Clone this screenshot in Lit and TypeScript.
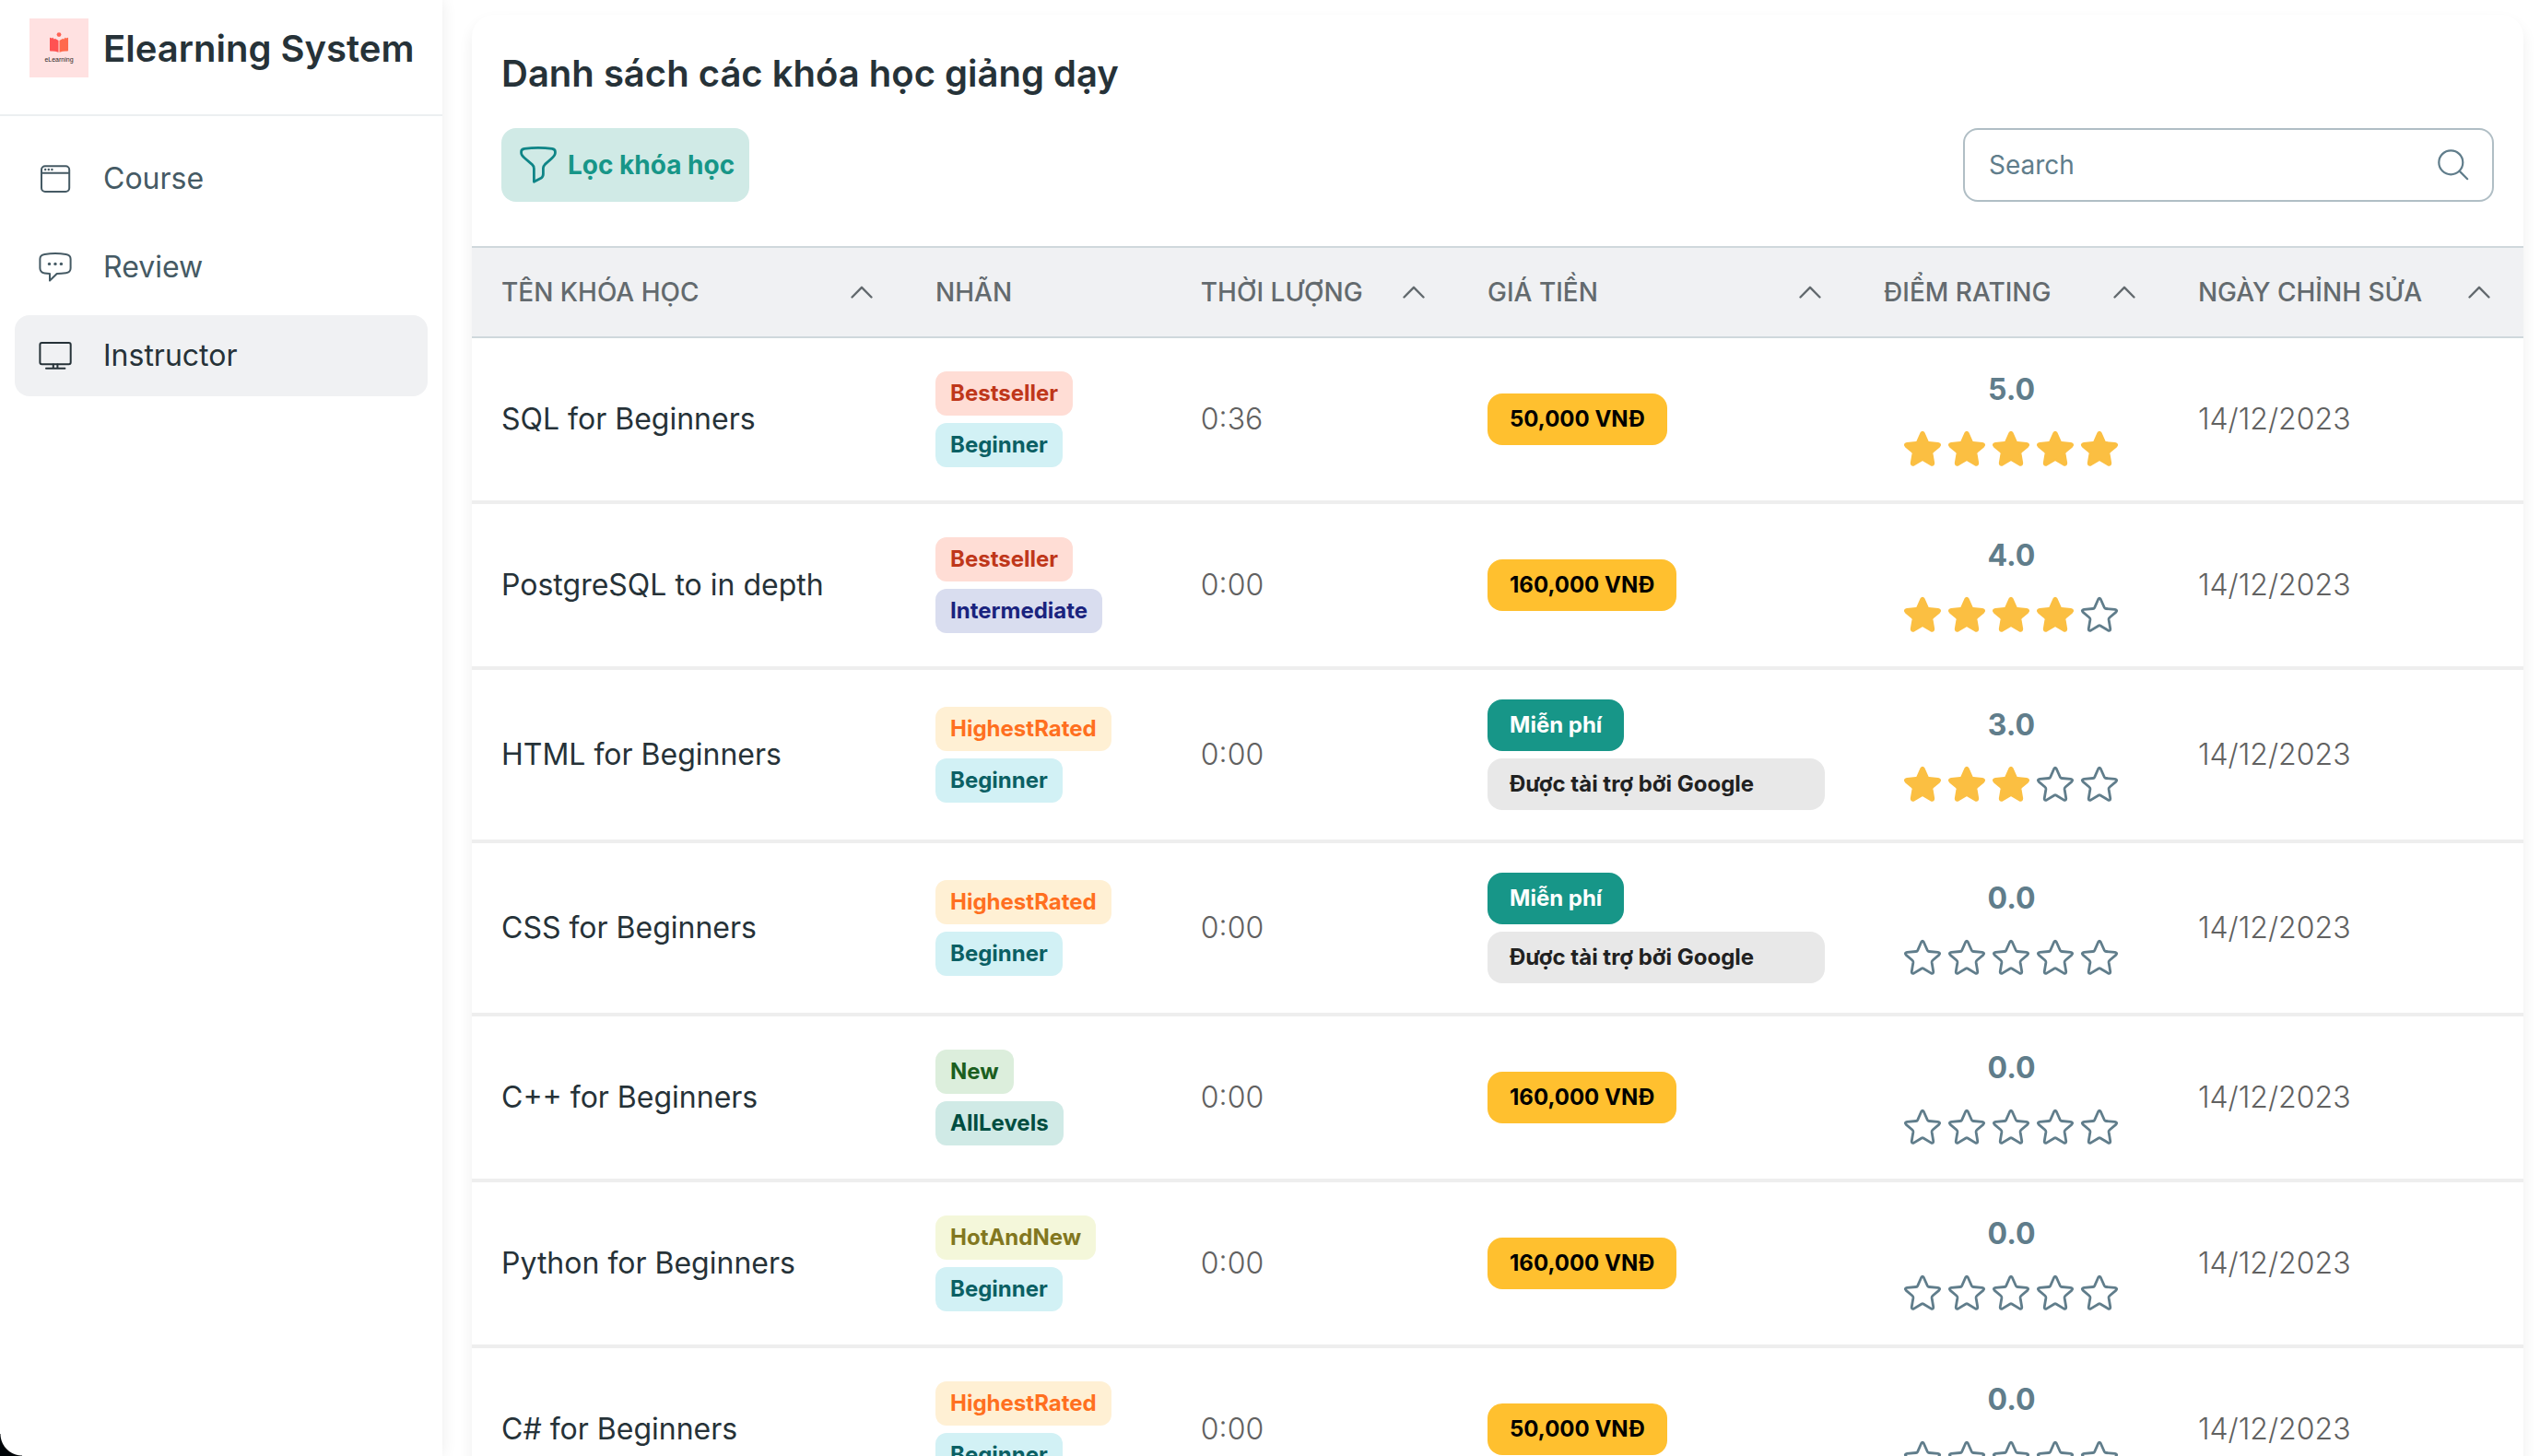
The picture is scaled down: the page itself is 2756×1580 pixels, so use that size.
import { LitElement, html, svg, css } from "lit";
import { customElement, property, state } from "lit/decorators.js";
import { classMap } from "lit/directives/class-map.js";

interface Course {
  name: string;
  tags: string[];
  duration: string;
  price: string;
  sponsor?: string;
  rating: number;
  updated: string;
}

const COURSES: Course[] = [
  { name: "SQL for Beginners", tags: ["Bestseller", "Beginner"], duration: "0:36", price: "50,000 VNĐ", rating: 5, updated: "14/12/2023" },
  { name: "PostgreSQL to in depth", tags: ["Bestseller", "Intermediate"], duration: "0:00", price: "160,000 VNĐ", rating: 4, updated: "14/12/2023" },
  { name: "HTML for Beginners", tags: ["HighestRated", "Beginner"], duration: "0:00", price: "Miễn phí", sponsor: "Được tài trợ bởi Google", rating: 3, updated: "14/12/2023" },
  { name: "CSS for Beginners", tags: ["HighestRated", "Beginner"], duration: "0:00", price: "Miễn phí", sponsor: "Được tài trợ bởi Google", rating: 0, updated: "14/12/2023" },
  { name: "C++ for Beginners", tags: ["New", "AllLevels"], duration: "0:00", price: "160,000 VNĐ", rating: 0, updated: "14/12/2023" },
  { name: "Python for Beginners", tags: ["HotAndNew", "Beginner"], duration: "0:00", price: "160,000 VNĐ", rating: 0, updated: "14/12/2023" },
  { name: "C# for Beginners", tags: ["HighestRated", "Beginner"], duration: "0:00", price: "50,000 VNĐ", rating: 0, updated: "14/12/2023" },
];

const COLUMNS = [
  { label: "TÊN KHÓA HỌC", key: "name", sortable: true },
  { label: "NHÃN", key: "tags", sortable: false },
  { label: "THỜI LƯỢNG", key: "duration", sortable: true },
  { label: "GIÁ TIỀN", key: "price", sortable: true },
  { label: "ĐIỂM RATING", key: "rating", sortable: true },
  { label: "NGÀY CHỈNH SỬA", key: "updated", sortable: true },
];

const MENU_ICONS = {
  course: svg`
    <rect x="5" y="6.3" width="30.2" height="27.6" rx="4"></rect>
    <path d="M5 13.7H35"></path>
    <g class="dot"><circle cx="9.2" cy="10" r="1.2"></circle><circle cx="12.8" cy="10" r="1.2"></circle><circle cx="16.4" cy="10" r="1.2"></circle></g>`,
  review: svg`
    <path d="M8.5 6Q20 4 31.5 6Q36.6 6.8 36.6 11V21Q36.6 25.6 31.5 26.2Q26.5 26.9 21.7 27L14 34.5V27Q11 26.8 8.5 26.4Q3.4 25.6 3.4 21V11Q3.4 6.8 8.5 6Z"></path>
    <g class="dot"><circle cx="13.5" cy="16.4" r="1.7"></circle><circle cx="20" cy="16.4" r="1.7"></circle><circle cx="26.4" cy="16.4" r="1.7"></circle></g>`,
  instructor: svg`
    <rect x="3.4" y="6" width="33.3" height="23.2" rx="2"></rect>
    <path d="M10 33.8H30.4M17.8 29.5V33.5M22.4 29.5V33.5"></path>`,
};

const MENU: { label: string; icon: keyof typeof MENU_ICONS }[] = [
  { label: "Course", icon: "course" },
  { label: "Review", icon: "review" },
  { label: "Instructor", icon: "instructor" },
];

@customElement("star-rating")
export class StarRating extends LitElement {
  @property({ type: Number }) value = 0;

  static styles = css`
    :host {
      display: flex;
      flex-direction: column;
      align-items: center;
      gap: 16px;
    }
    .score {
      font-size: 32px;
      line-height: 48px;
      font-weight: 700;
      color: #607d8b;
    }
    .stars {
      display: flex;
    }
    .star {
      width: 48px;
      height: 48px;
      fill: none;
      stroke: #607d8b;
      stroke-width: 2.8;
      stroke-linejoin: round;
    }
    .star.on {
      fill: #fbbf42;
      stroke: #fbbf42;
    }
  `;

  render() {
    return html`
      <span class="score">${this.value.toFixed(1)}</span>
      <span class="stars" role="img" aria-label="${this.value} / 5">
        ${[1, 2, 3, 4, 5].map(
          (n) => html`<svg class=${classMap({ star: true, on: n <= this.value })} viewBox="0 0 48 48" aria-hidden="true">
            <path d="M22.7 7.3Q24 5.2 25.3 7.3L29.3 16.3Q29.8 17.4 31 17.5L40.8 18.4Q44 19 41.8 21.4L35.1 27Q33.9 28 34.1 29.4L35.8 39.4Q35.9 42.2 33.4 41.1L24.9 36Q24 35.5 23.1 36L14.6 41.1Q12.1 42.2 12.2 39.4L13.9 29.4Q14.1 28 12.9 27L6.2 21.4Q4 19 7.2 18.4L17 17.5Q18.2 17.4 18.7 16.3Z"></path>
          </svg>`
        )}
      </span>
    `;
  }
}

@customElement("app-root")
export class AppRoot extends LitElement {
  @state() private active = "Instructor";

  static styles = css`
    :host {
      display: block;
      font-family: Inter, "Noto Sans", sans-serif;
      color: #263238;
      background: #fff;
    }
    * {
      box-sizing: border-box;
    }
    .layout {
      display: flex;
      position: relative;
      height: 100vh;
      overflow: hidden;
    }
    .sidebar {
      flex: none;
      width: 480px;
      background: #fff;
      box-shadow: 0 0 16px rgba(0, 0, 0, 0.08);
    }
    .brand {
      display: flex;
      align-items: flex-start;
      gap: 16px;
      height: 126px;
      padding: 20px 32px;
      border-bottom: 2px solid #eceff1;
    }
    .logo {
      flex: none;
      width: 64px;
      height: 64px;
    }
    .logo-name {
      font: 400 7px "Liberation Sans", sans-serif;
      fill: #2e2628;
    }
    .brand-name {
      font-size: 40px;
      line-height: 66px;
      font-weight: 600;
      white-space: nowrap;
    }
    .menu {
      display: flex;
      flex-direction: column;
      gap: 8px;
      padding: 24px 16px;
    }
    .menu-item {
      display: flex;
      align-items: center;
      gap: 32px;
      height: 88px;
      padding: 0 24px;
      border-radius: 16px;
      font-size: 32px;
      line-height: 48px;
      color: #455a64;
      text-decoration: none;
    }
    .menu-item.active {
      background: #f0f1f3;
      color: #263238;
    }
    .menu-icon {
      width: 40px;
      height: 40px;
      fill: none;
      stroke: currentColor;
      stroke-width: 2;
      stroke-linejoin: round;
      stroke-linecap: round;
    }
    .dot {
      fill: currentColor;
      stroke: none;
    }
    .main {
      flex: 1;
      min-width: 0;
      padding: 16px 18px 0 32px;
    }
    .card {
      padding-top: 40px;
      border-radius: 24px;
      background: #fff;
      box-shadow: 0 8px 16px rgba(0, 0, 0, 0.07);
    }
    .title {
      margin: 0 32px;
      font-size: 40px;
      line-height: 48px;
      font-weight: 600;
    }
    .toolbar {
      display: flex;
      justify-content: space-between;
      padding: 35px 32px 48px;
    }
    .filter {
      display: flex;
      align-items: center;
      gap: 8px;
      height: 80px;
      padding: 0 16px;
      border: 0;
      border-radius: 16px;
      background: #d0eae6;
      color: #179688;
      font: inherit;
      font-size: 28px;
      font-weight: 700;
      cursor: pointer;
    }
    .filter-icon {
      width: 48px;
      height: 48px;
      fill: none;
      stroke: #0f8587;
      stroke-width: 2.8;
      stroke-linejoin: round;
    }
    .search {
      display: flex;
      align-items: center;
      width: 576px;
      height: 80px;
      padding: 0 22px 0 26px;
      border: 2px solid #b0bec5;
      border-radius: 16px;
    }
    .search-input {
      flex: 1;
      min-width: 0;
      padding: 0;
      border: 0;
      outline: 0;
      background: none;
      color: #263238;
      font: inherit;
      font-size: 28px;
    }
    .search-input::placeholder {
      color: #607d8b;
      opacity: 1;
    }
    .search-icon {
      width: 40px;
      height: 40px;
      fill: none;
      stroke: #607d8b;
      stroke-width: 2.2;
      stroke-linecap: round;
    }
    .courses {
      width: 100%;
      table-layout: fixed;
      border-collapse: separate;
      border-spacing: 0;
    }
    .col-name {
      width: 21.16%;
    }
    .col-tags {
      width: 12.93%;
    }
    .col-duration {
      width: 13.98%;
    }
    .col-price {
      width: 19.32%;
    }
    .col-rating {
      width: 15.31%;
    }
    .col-updated {
      width: 17.3%;
    }
    .head {
      height: 100px;
      padding: 0 32px;
      border: solid #cfd8dc;
      border-width: 2px 0;
      background: #f0f1f3;
      color: #636a6e;
      font-size: 28px;
      font-weight: 500;
      text-align: left;
      white-space: nowrap;
    }
    .sort {
      display: flex;
      align-items: center;
      justify-content: space-between;
      width: 100%;
      padding: 0;
      border: 0;
      background: none;
      color: inherit;
      font: inherit;
      cursor: pointer;
    }
    .sort-icon {
      flex: none;
      width: 32px;
      height: 32px;
      fill: none;
      stroke: currentColor;
      stroke-width: 2.4;
      stroke-linecap: round;
      stroke-linejoin: round;
    }
    .cell {
      padding: 32px;
      border-bottom: 4px solid #eee;
      vertical-align: middle;
      font-size: 32px;
      line-height: 48px;
      text-align: left;
      font-weight: 400;
    }
    .cell.thin {
      font-weight: 300;
      color: #616161;
    }
    .stack {
      display: flex;
      flex-direction: column;
      align-items: flex-start;
      gap: 8px;
    }
    .tag {
      padding: 0 16px;
      border-radius: 12px;
      font-size: 24px;
      line-height: 48px;
      font-weight: 700;
    }
    .tag.Bestseller {
      background: #ffddd5;
      color: #bf371a;
    }
    .tag.Beginner {
      background: #d2f1f5;
      color: #0b6064;
    }
    .tag.Intermediate {
      background: #d9ddef;
      color: #1a237e;
    }
    .tag.HighestRated {
      background: #fff0d4;
      color: #ff6f20;
    }
    .tag.New {
      background: #dceedc;
      color: #1b5e20;
    }
    .tag.AllLevels {
      background: #d0eae6;
      color: #004d40;
    }
    .tag.HotAndNew {
      background: #f4f7da;
      color: #827720;
    }
    .price {
      padding: 0 24px;
      border-radius: 16px;
      background: #ffc02f;
      color: #000;
      font-size: 24px;
      line-height: 56px;
      font-weight: 700;
    }
    .price.free {
      background: #179688;
      color: #fff;
    }
    .price.sponsor {
      align-self: stretch;
      background: #e8e8e8;
      color: #212121;
    }
    .corner {
      position: absolute;
      left: 0;
      bottom: 0;
      width: 24px;
      height: 24px;
      background: radial-gradient(circle at 100% 0, transparent 23px, #000508 24px);
    }
  `;

  private renderHead(column: (typeof COLUMNS)[number]) {
    return html`<th class="head" scope="col">
      ${column.sortable
        ? html`<button class="sort" type="button">
            ${column.label}
            <svg class="sort-icon" viewBox="0 0 32 32" aria-hidden="true"><path d="M5.5 21.5L16 10.8L26.5 21.5"></path></svg>
          </button>`
        : column.label}
    </th>`;
  }

  private renderRow(course: Course) {
    return html`<tr>
      <th class="cell" scope="row">${course.name}</th>
      <td class="cell">
        <div class="stack">${course.tags.map((tag) => html`<span class="tag ${tag}">${tag}</span>`)}</div>
      </td>
      <td class="cell thin">${course.duration}</td>
      <td class="cell">
        <div class="stack">
          <span class=${classMap({ price: true, free: !!course.sponsor })}>${course.price}</span>
          ${course.sponsor ? html`<span class="price sponsor">${course.sponsor}</span>` : null}
        </div>
      </td>
      <td class="cell"><star-rating .value=${course.rating}></star-rating></td>
      <td class="cell thin">${course.updated}</td>
    </tr>`;
  }

  render() {
    return html`
      <div class="layout">
        <aside class="sidebar">
          <div class="brand">
            <svg class="logo" viewBox="0 0 64 64" aria-hidden="true">
              <defs>
                <linearGradient id="book" x1="0" x2="1">
                  <stop offset="0.4" stop-color="#ff5252"></stop>
                  <stop offset="0.6" stop-color="#ff6a4d"></stop>
                </linearGradient>
              </defs>
              <rect width="64" height="64" fill="#ffe1e1"></rect>
              <circle cx="32" cy="17.6" r="2.4" fill="#ff6355"></circle>
              <path fill="#ff5252" d="M22 20.8L24.2 21.6L25.4 20.8L26.6 22.6L28 22L31.5 24V36.8Q27 35 22.8 35.6Q22 35.6 22 34.6Z"></path>
              <path fill="#ff6a4d" d="M42 20.8L39.8 21.6L38.6 20.8L37.4 22.6L36 22L32.5 24V36.8Q37 35 41.2 35.6Q42 35.6 42 34.6Z"></path>
              <text class="logo-name" x="32" y="46.8" text-anchor="middle">eLearning</text>
            </svg>
            <span class="brand-name">Elearning System</span>
          </div>
          <nav class="menu">
            ${MENU.map(
              (item) => html`<a
                class=${classMap({ "menu-item": true, active: item.label === this.active })}
                href="#${item.icon}"
                @click=${() => (this.active = item.label)}
              >
                <svg class="menu-icon" viewBox="0 0 40 40" aria-hidden="true">${MENU_ICONS[item.icon]}</svg>
                <span>${item.label}</span>
              </a>`
            )}
          </nav>
        </aside>
        <main class="main">
          <section class="card">
            <h1 class="title">Danh sách các khóa học giảng dạy</h1>
            <div class="toolbar">
              <button class="filter" type="button">
                <svg class="filter-icon" viewBox="0 0 48 48" aria-hidden="true">
                  <path d="M9 6.4Q24 4.4 39 6.4Q42.4 7 42.4 9.5V11Q42.4 13.4 38.5 17L31.3 23.4Q29.4 25.2 29.4 27.6V34Q29.4 37 26.6 38.6L19.4 42.2V28Q19.4 25.2 17.5 23.6L9.5 16.8Q5.6 13.4 5.6 11V9.5Q5.6 7 9 6.4Z"></path>
                </svg>
                Lọc khóa học
              </button>
              <label class="search">
                <input class="search-input" type="text" placeholder="Search" aria-label="Search" />
                <svg class="search-icon" viewBox="0 0 40 40" aria-hidden="true">
                  <circle cx="17.3" cy="17.3" r="13"></circle>
                  <path d="M26.6 26.6L35.2 35.2"></path>
                </svg>
              </label>
            </div>
            <table class="courses">
              <colgroup>
                ${COLUMNS.map((column) => html`<col class="col-${column.key}" />`)}
              </colgroup>
              <thead>
                <tr>${COLUMNS.map((column) => this.renderHead(column))}</tr>
              </thead>
              <tbody>
                ${COURSES.map((course) => this.renderRow(course))}
              </tbody>
            </table>
          </section>
        </main>
        <div class="corner"></div>
      </div>
    `;
  }
}
